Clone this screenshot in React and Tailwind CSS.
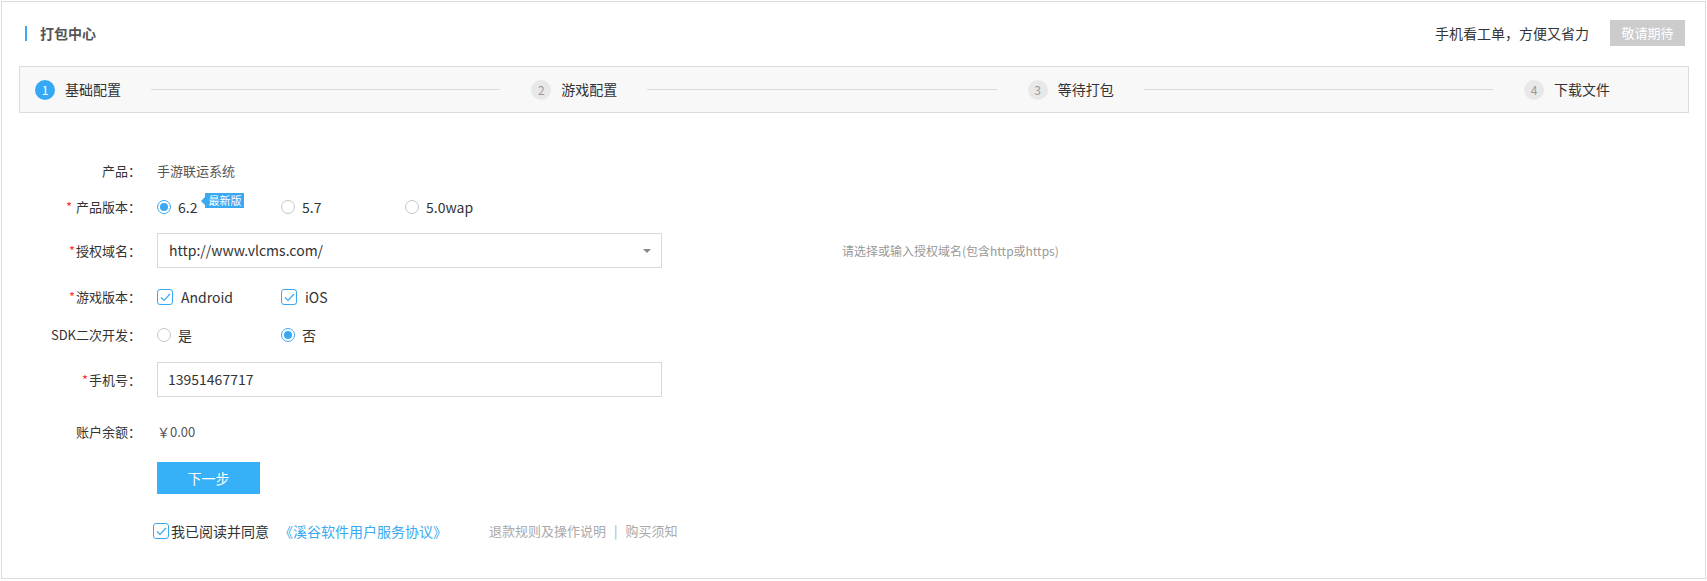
import { useState } from 'react';

const font = { fontFamily: '"Noto Sans CJK SC", "Noto Sans", sans-serif' };

function Radio({ checked, label, children, onClick }) {
    return (
        <label onClick={onClick} className="flex items-center w-[124px] cursor-pointer">
            <span className={`w-[14px] h-[14px] rounded-full border flex items-center justify-center ${checked ? 'border-[#3aa9f2]' : 'border-[#c6c6c6]'}`}>
                {checked && <span className="w-[8px] h-[8px] rounded-full bg-[#3aa9f2]" />}
            </span>
            <span className="ml-[7px] text-[14px] text-[#333]">{label}</span>
            {children}
        </label>
    );
}

function Check({ checked, label, onClick, className = '' }) {
    return (
        <label onClick={onClick} className={`flex items-center cursor-pointer ${className}`}>
            <span className="w-[16px] h-[16px] rounded-[3px] border border-[#3aa9f2] bg-white flex items-center justify-center">
                {checked && (
                    <svg width="11" height="9" viewBox="0 0 11 9" fill="none">
                        <path d="M1 4.5 L4 7.5 L10 1" stroke="#3aa9f2" strokeWidth="1.2" />
                    </svg>
                )}
            </span>
            {label && <span className="ml-[8px] text-[14px] text-[#333]">{label}</span>}
        </label>
    );
}

function Row({ label, required, className = 'h-[36px]', children }) {
    return (
        <div className={`flex items-center ${className}`}>
            <div className="w-[140px] text-right text-[13px] text-[#333] pr-[1px]">
                {required && <span className="text-[#f33] mr-[1px]">*</span>}
                {label}
            </div>
            <div className="ml-[15px] flex items-center h-full">{children}</div>
        </div>
    );
}

const steps = ['基础配置', '游戏配置', '等待打包', '下载文件'];

export default function App() {
    const [version, setVersion] = useState('6.2');
    const [android, setAndroid] = useState(true);
    const [ios, setIos] = useState(true);
    const [sdk, setSdk] = useState(false);
    const [agree, setAgree] = useState(true);

    return (
        <div className="bg-white pt-px px-px" style={font}>
            <div className="border border-[#dcdcdc] h-[578px]">
                {/* 顶部标题 */}
                <div className="h-[62px] flex items-center pl-[23px] pr-[20px]">
                    <span className="w-[2px] h-[15px] bg-[#3aa9f2]" />
                    <span className="ml-[13px] text-[14px] font-bold text-[#555]">打包中心</span>
                    <div className="ml-auto flex items-center">
                        <span className="text-[14px] text-[#333]">手机看工单，方便又省力</span>
                        <button className="ml-[21px] w-[75px] h-[26px] bg-[#cccccc] text-white text-[13px]">敬请期待</button>
                    </div>
                </div>

                {/* 步骤条 */}
                <div className="mt-[2px] ml-[17px] mr-[16px] h-[47px] border border-[#dcdcdc] bg-[#f8f8f8] flex items-center pl-[15px] pr-[78px]">
                    {steps.map((s, i) => (
                        <div key={s} className={`flex items-center ${i < 3 ? 'flex-1' : ''}`}>
                            <span className={`w-[20px] h-[20px] rounded-full flex items-center justify-center text-[12px] ${i === 0 ? 'bg-[#36a9f4] text-white' : 'bg-[#e8e8e8] text-[#999]'}`}>
                                {i + 1}
                            </span>
                            <span className="ml-[10px] text-[14px] text-[#333]">{s}</span>
                            {i < 3 && <span className="flex-1 h-px bg-[#dcdcdc] ml-[30px] mr-[31px]" />}
                        </div>
                    ))}
                </div>

                {/* 表单 */}
                <div className="mt-[40px]">
                    <Row label="产品：">
                        <span className="text-[13px] text-[#555]">手游联运系统</span>
                    </Row>
                    <Row label=" 产品版本：" required>
                        <Radio checked={version === '6.2'} label="6.2" onClick={() => setVersion('6.2')}>
                            <span className="relative ml-[8px] -mt-[14px] h-[15px] px-[3px] bg-[#3aa9f2] text-white text-[11px] leading-[15px]">
                                <span className="absolute -left-[4px] top-[4px] w-0 h-0 border-y-[4px] border-y-transparent border-r-[4px] border-r-[#3aa9f2]" />
                                最新版
                            </span>
                        </Radio>
                        <Radio checked={version === '5.7'} label="5.7" onClick={() => setVersion('5.7')} />
                        <Radio checked={version === '5.0wap'} label="5.0wap" onClick={() => setVersion('5.0wap')} />
                    </Row>
                    <Row label="授权域名：" required className="h-[35px] mt-[8px]">
                        <div className="w-[505px] h-[35px] border border-[#d9d9d9] flex items-center pl-[11px] pr-[10px]">
                            <span className="text-[14px] text-[#333]">http://www.vlcms.com/</span>
                            <span className="ml-auto w-0 h-0 border-x-[4px] border-x-transparent border-t-[4px] border-t-[#888]" />
                        </div>
                        <span className="ml-[180px] text-[12px] text-[#999]">请选择或输入授权域名(包含http或https)</span>
                    </Row>
                    <Row label="游戏版本：" required className="h-[36px] mt-[11px]">
                        <Check checked={android} label="Android" onClick={() => setAndroid(!android)} className="w-[124px]" />
                        <Check checked={ios} label="iOS" onClick={() => setIos(!ios)} />
                    </Row>
                    <Row label="SDK二次开发：" className="h-[36px] mt-[2px]">
                        <Radio checked={sdk} label="是" onClick={() => setSdk(true)} />
                        <Radio checked={!sdk} label="否" onClick={() => setSdk(false)} />
                    </Row>
                    <Row label="手机号：" required className="h-[35px] mt-[9px]">
                        <div className="w-[505px] h-[35px] border border-[#d9d9d9] flex items-center pl-[10px]">
                            <span className="text-[14px] text-[#333]">13951467717</span>
                        </div>
                    </Row>
                    <Row label="账户余额：" className="h-[36px] mt-[17px]">
                        <span className="text-[13px] text-[#555]">￥0.00</span>
                    </Row>
                    <div className="mt-[12px] ml-[155px]">
                        <button className="w-[103px] h-[32px] bg-[#36b0f7] text-white text-[14px]">下一步</button>
                    </div>
                    <div className="mt-[19px] h-[36px] flex items-center ml-[151px]">
                        <Check checked={agree} onClick={() => setAgree(!agree)} />
                        <span className="ml-[2px] text-[14px] text-[#333]">我已阅读并同意</span>
                        <span className="ml-[10px] text-[14px] text-[#3aa9f2] cursor-pointer">《溪谷软件用户服务协议》</span>
                        <span className="ml-[42px] text-[13px] text-[#aaa]">退款规则及操作说明</span>
                        <span className="mx-[8px] text-[13px] text-[#aaa]">|</span>
                        <span className="text-[13px] text-[#aaa]">购买须知</span>
                    </div>
                </div>
            </div>
        </div>
    );
}
